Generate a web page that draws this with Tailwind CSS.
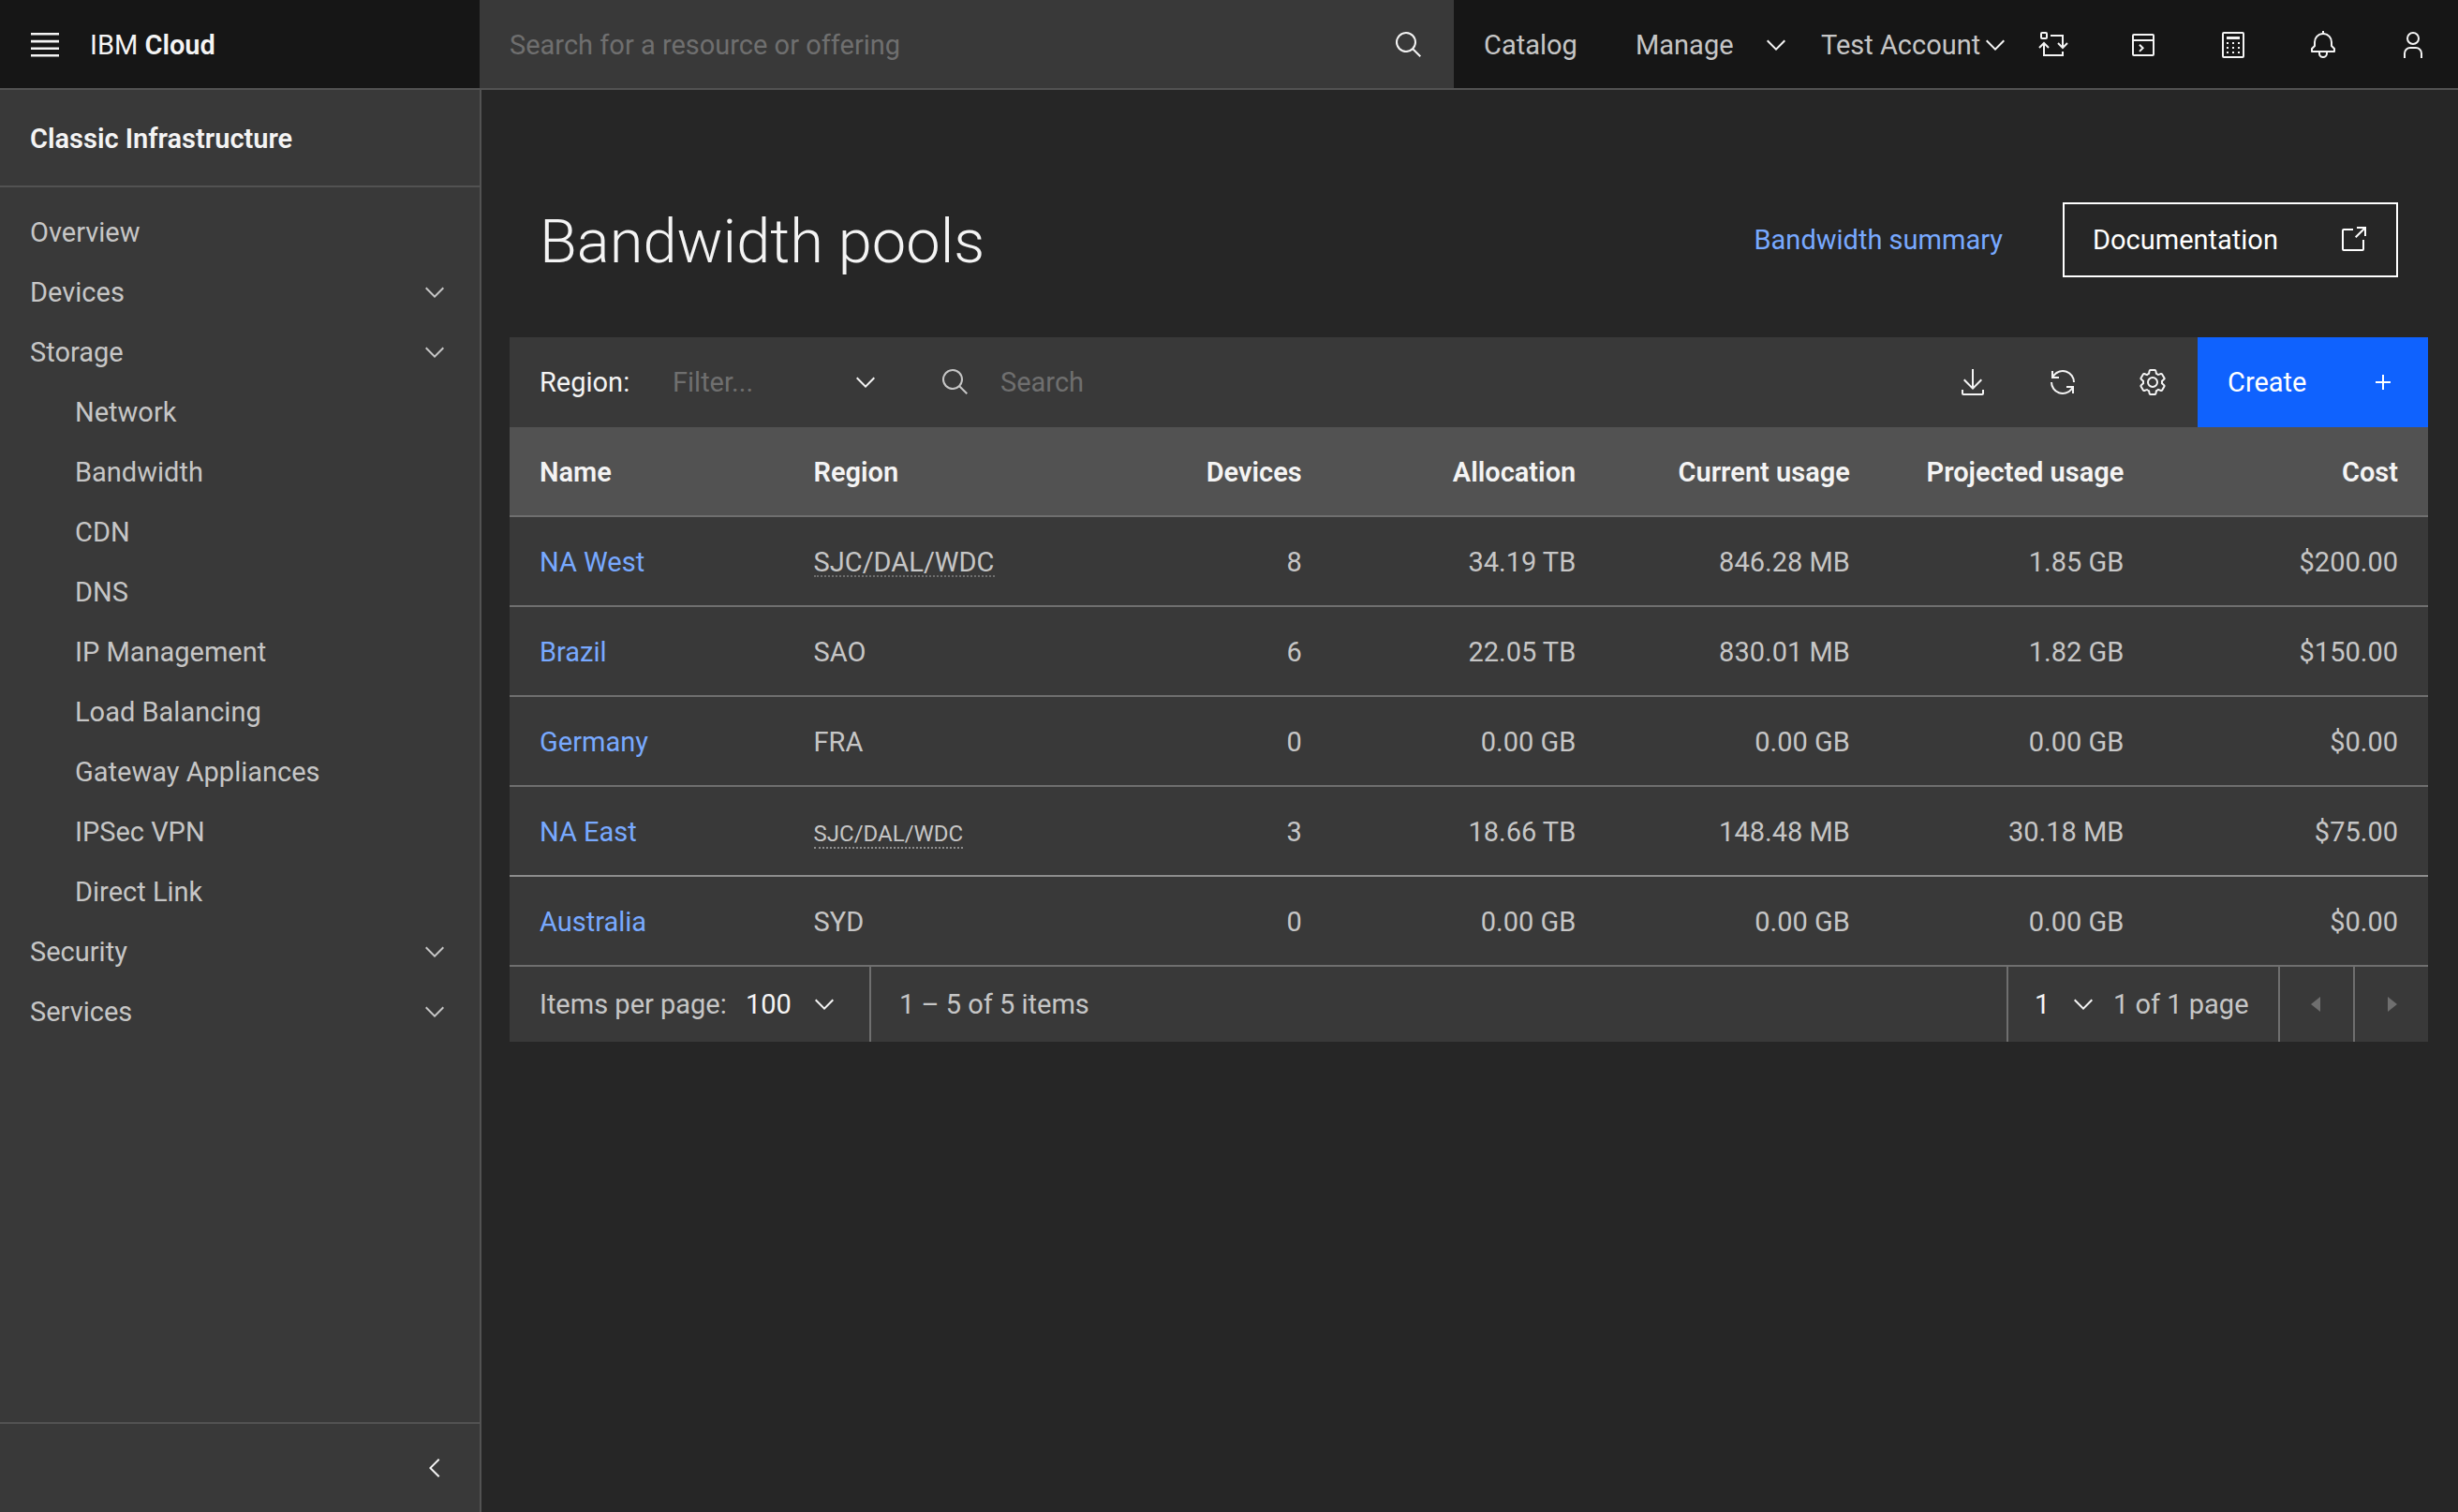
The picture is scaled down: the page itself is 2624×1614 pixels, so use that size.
<!DOCTYPE html>
<html lang="en">
<head>
<meta charset="utf-8">
<meta name="viewport" content="width=device-width, initial-scale=1">
<title>Bandwidth pools - IBM Cloud</title>
<script src="https://cdn.jsdelivr.net/npm/@tailwindcss/browser@4"></script>
</head>
<body class="flex min-h-screen flex-col bg-[#262626] font-['Roboto',sans-serif] text-[29px] leading-9 text-[#c6c6c6]">

<!-- Shared icon shapes -->
<svg class="hidden" aria-hidden="true">
  <symbol id="chevron-down" viewBox="0 0 32 32"><path d="M16 22 6 12l1.4-1.4 8.6 8.6 8.6-8.6L26 12z"/></symbol>
  <symbol id="search" viewBox="0 0 32 32"><path d="m29 27.586-7.552-7.552a11.018 11.018 0 1 0-1.414 1.414L27.586 29ZM4 13a9 9 0 1 1 9 9 9.01 9.01 0 0 1-9-9Z"/></symbol>
</svg>

<header class="relative flex h-24 bg-[#161616] after:absolute after:inset-x-0 after:bottom-0 after:h-0.5 after:bg-[#525252] after:content-['']">
  <div class="flex w-[512px] shrink-0 items-center gap-8 px-8">
    <button type="button" aria-label="Menu" class="text-[#f4f4f4]">
      <svg class="size-8 fill-current" viewBox="0 0 32 32" aria-hidden="true"><path d="M1 3h30v2.6H1zM1 10.8h30v2.6H1zM1 18.4h30V21H1zM1 26h30v2.6H1z"/></svg>
    </button>
    <a href="#" class="text-[#f4f4f4]">IBM <span class="font-semibold">Cloud</span></a>
  </div>
  <form role="search" class="flex min-w-0 flex-1 items-center bg-[#393939] px-8">
    <input type="search" aria-label="Search for a resource or offering" placeholder="Search for a resource or offering" class="h-full min-w-0 flex-1 bg-transparent text-[#f4f4f4] outline-none placeholder:text-[#6f6f6f]">
    <button type="submit" aria-label="Search" class="text-[#f4f4f4]"><svg class="size-8 fill-current" aria-hidden="true"><use href="#search"/></svg></button>
  </form>
  <nav aria-label="Account" class="flex shrink-0 items-stretch">
    <a href="#" class="flex w-[162px] items-center pl-8">Catalog</a>
    <button type="button" class="flex w-[198px] items-center justify-between pl-8">Manage<svg class="size-8 shrink-0 fill-[#f4f4f4]" aria-hidden="true"><use href="#chevron-down"/></svg></button>
    <button type="button" class="flex w-[232px] items-center justify-between pl-8 whitespace-nowrap">Test Account<svg class="size-8 shrink-0 fill-[#f4f4f4]" aria-hidden="true"><use href="#chevron-down"/></svg></button>
    <button type="button" aria-label="Switch account" class="flex w-24 items-center justify-center text-[#f4f4f4]">
      <svg class="size-8 fill-none stroke-current stroke-2" viewBox="0 0 32 32" aria-hidden="true"><rect x="3" y="3" width="6" height="6" rx="1"/><path d="M13 6h13v13M21 14l5 5 5-5M26 23v4H6V14M1 19l5-5 5 5"/></svg>
    </button>
    <button type="button" aria-label="Cloud shell" class="flex w-24 items-center justify-center text-[#f4f4f4]">
      <svg class="size-8 fill-none stroke-current stroke-2" viewBox="0 0 32 32" aria-hidden="true"><rect x="5" y="5" width="22" height="22" rx="1"/><path d="M5 11h22M12 15.7l3.6 3.6-3.6 3.6"/></svg>
    </button>
    <button type="button" aria-label="Cost estimator" class="flex w-24 items-center justify-center text-[#f4f4f4]">
      <svg class="size-8 fill-current" viewBox="0 0 32 32" aria-hidden="true"><rect x="5" y="3" width="22" height="26" rx="1" fill="none" stroke="currentColor" stroke-width="2"/><path d="M9 7h14v3H9zM9 13h2v2H9zM15 13h2v2h-2zM21 13h2v2h-2zM9 18h2v2H9zM15 18h2v2h-2zM21 18h2v2h-2zM9 23h2v2H9zM15 23h2v2h-2zM21 23h2v2h-2z"/></svg>
    </button>
    <button type="button" aria-label="Notifications" class="flex w-24 items-center justify-center text-[#f4f4f4]">
      <svg class="size-8 fill-current" viewBox="0 0 32 32" aria-hidden="true"><path d="M28.7071 19.293 26 16.5859V13a10.0136 10.0136 0 0 0-9-9.9492V1H15V3.0508A10.0136 10.0136 0 0 0 6 13v3.5859L3.2929 19.293A1 1 0 0 0 3 20v3a1 1 0 0 0 1 1h7v.7768a5.152 5.152 0 0 0 4.5 5.1987A5.0057 5.0057 0 0 0 21 25V24h7a1 1 0 0 0 1-1V20A1 1 0 0 0 28.7071 19.293ZM19 25a3 3 0 0 1-6 0V24h6Zm8-3H5V20.4141L7.707 17.707A1 1 0 0 0 8 17V13a8 8 0 0 1 16 0v4a1 1 0 0 0 .293.707L27 20.4141Z"/></svg>
    </button>
    <button type="button" aria-label="Profile" class="flex w-24 items-center justify-center text-[#f4f4f4]">
      <svg class="size-8 fill-current" viewBox="0 0 32 32" aria-hidden="true"><path d="M16 4a5 5 0 1 1-5 5 5 5 0 0 1 5-5m0-2a7 7 0 1 0 7 7 7 7 0 0 0-7-7ZM26 30H24V25a5 5 0 0 0-5-5H13a5 5 0 0 0-5 5v5H6V25a7 7 0 0 1 7-7h6a7 7 0 0 1 7 7Z"/></svg>
    </button>
  </nav>
</header>

<div class="flex flex-1">
  <aside class="flex w-[514px] shrink-0 flex-col border-r-2 border-[#525252] bg-[#393939]">
    <h2 class="flex h-[104px] items-center border-b-2 border-[#525252] px-8 pt-0.5 font-semibold text-[#f4f4f4]">Classic Infrastructure</h2>
    <nav aria-label="Classic Infrastructure" class="flex flex-1 flex-col pt-4">
      <a href="#" class="flex h-16 items-center px-8">Overview</a>
      <button type="button" class="flex h-16 items-center justify-between px-8">Devices<svg class="size-8 fill-current" aria-hidden="true"><use href="#chevron-down"/></svg></button>
      <button type="button" aria-expanded="true" class="flex h-16 items-center justify-between px-8">Storage<svg class="size-8 fill-current" aria-hidden="true"><use href="#chevron-down"/></svg></button>
      <ul>
        <li><a href="#" class="flex h-16 items-center pl-20">Network</a></li>
        <li><a href="#" class="flex h-16 items-center pl-20">Bandwidth</a></li>
        <li><a href="#" class="flex h-16 items-center pl-20">CDN</a></li>
        <li><a href="#" class="flex h-16 items-center pl-20">DNS</a></li>
        <li><a href="#" class="flex h-16 items-center pl-20">IP Management</a></li>
        <li><a href="#" class="flex h-16 items-center pl-20">Load Balancing</a></li>
        <li><a href="#" class="flex h-16 items-center pl-20">Gateway Appliances</a></li>
        <li><a href="#" class="flex h-16 items-center pl-20">IPSec VPN</a></li>
        <li><a href="#" class="flex h-16 items-center pl-20">Direct Link</a></li>
      </ul>
      <button type="button" class="flex h-16 items-center justify-between px-8">Security<svg class="size-8 fill-current" aria-hidden="true"><use href="#chevron-down"/></svg></button>
      <button type="button" class="flex h-16 items-center justify-between px-8">Services<svg class="size-8 fill-current" aria-hidden="true"><use href="#chevron-down"/></svg></button>
    </nav>
    <button type="button" aria-label="Collapse navigation" class="flex h-24 items-center justify-end border-t-2 border-[#525252] px-8 text-[#f4f4f4]">
      <svg class="size-8 fill-current" viewBox="0 0 32 32" aria-hidden="true"><path d="M10 16 20 6l1.4 1.4-8.6 8.6 8.6 8.6L20 26z"/></svg>
    </button>
  </aside>

  <main class="min-w-0 flex-1 pt-[120px] pr-8 pl-[30px]">
    <div class="mb-16 flex h-20 items-center px-8">
      <h1 class="flex-1 pt-1 text-[65px] leading-20 font-light text-[#f4f4f4]">Bandwidth pools</h1>
      <a href="#" class="mr-16 text-[#78a9ff]">Bandwidth summary</a>
      <a href="#" class="flex h-20 w-[358px] items-center justify-between border-2 border-white px-[30px] text-white">Documentation
        <svg class="size-8 fill-current" viewBox="0 0 32 32" aria-hidden="true"><path d="M26 28H6a2 2 0 0 1-2-2V6a2 2 0 0 1 2-2H16V6H6V26H26V16h2V26A2 2 0 0 1 26 28ZM20 2V4h6.586L18 12.586 19.414 14 28 5.414V12h2V2Z"/></svg>
      </a>
    </div>

    <div class="flex h-24 items-center bg-[#393939] pl-8">
      <label for="region" class="w-[142px] text-[#f4f4f4]">Region:</label>
      <div class="relative mr-16 w-[222px]">
        <select id="region" class="h-12 w-full appearance-none bg-transparent text-[#6f6f6f] outline-none"><option>Filter...</option></select>
        <svg class="pointer-events-none absolute top-2 right-0 size-8 fill-[#f4f4f4]" aria-hidden="true"><use href="#chevron-down"/></svg>
      </div>
      <label for="pool-search" class="mr-8" aria-label="Search"><svg class="size-8 fill-current" aria-hidden="true"><use href="#search"/></svg></label>
      <input id="pool-search" type="search" placeholder="Search" class="h-full min-w-0 flex-1 bg-transparent text-[#f4f4f4] outline-none placeholder:text-[#6f6f6f]">
      <button type="button" aria-label="Download" class="flex size-24 items-center justify-center text-[#f4f4f4]">
        <svg class="size-8 fill-current" viewBox="0 0 32 32" aria-hidden="true"><path d="M26 24v4H6v-4H4v4a2 2 0 0 0 2 2h20a2 2 0 0 0 2-2v-4zM26 14l-1.41-1.41L17 20.17V2h-2v18.17l-7.59-7.58L6 14l10 10z"/></svg>
      </button>
      <button type="button" aria-label="Refresh" class="flex size-24 items-center justify-center text-[#f4f4f4]">
        <svg class="size-8 fill-current" viewBox="0 0 32 32" aria-hidden="true"><path d="M12 10H6.78A11 11 0 0 1 27 16h2A13 13 0 0 0 6 7.68V4H4v8h8ZM20 22h5.22A11 11 0 0 1 5 16H3a13 13 0 0 0 23 8.32V28h2V20H20Z"/></svg>
      </button>
      <button type="button" aria-label="Settings" class="flex size-24 items-center justify-center text-[#f4f4f4]">
        <svg class="size-8 fill-current" viewBox="0 0 32 32" aria-hidden="true"><path d="M27 16.76c0-.25 0-.5 0-.76s0-.51 0-.77l1.92-1.68A2 2 0 0 0 29.3 11L26.94 7a2 2 0 0 0-1.73-1 2 2 0 0 0-.64.1l-2.43.82a11.35 11.35 0 0 0-1.31-.75l-.51-2.52a2 2 0 0 0-2-1.61H13.64a2 2 0 0 0-2 1.61l-.51 2.52a11.48 11.48 0 0 0-1.32.75L7.43 6.06A2 2 0 0 0 6.79 6 2 2 0 0 0 5.06 7L2.7 11a2 2 0 0 0 .41 2.51L5 15.24c0 .25 0 .5 0 .76s0 .51 0 .77L3.11 18.45A2 2 0 0 0 2.7 21L5.06 25a2 2 0 0 0 1.73 1 2 2 0 0 0 .64-.1l2.43-.82a11.35 11.35 0 0 0 1.31.75l.51 2.52a2 2 0 0 0 2 1.61h4.72a2 2 0 0 0 2-1.61l.51-2.52a11.48 11.48 0 0 0 1.32-.75l2.42.82a2 2 0 0 0 .64.1 2 2 0 0 0 1.73-1L29.3 21a2 2 0 0 0-.41-2.51ZM25.21 24l-3.43-1.16a8.86 8.86 0 0 1-2.71 1.57L18.36 28H13.64l-.71-3.55a9.36 9.36 0 0 1-2.7-1.57L6.79 24 4.43 20l2.72-2.4a8.9 8.9 0 0 1 0-3.13L4.43 12 6.79 8l3.43 1.16a8.86 8.86 0 0 1 2.71-1.57L13.64 4h4.72l.71 3.55a9.36 9.36 0 0 1 2.7 1.57L25.21 8 27.57 12l-2.72 2.4a8.9 8.9 0 0 1 0 3.13L27.57 20Z"/><path d="M16 22a6 6 0 1 1 6-6 5.94 5.94 0 0 1-6 6Zm0-10a3.91 3.91 0 0 0-4 4 3.91 3.91 0 0 0 4 4 3.91 3.91 0 0 0 4-4 3.91 3.91 0 0 0-4-4Z"/></svg>
      </button>
      <button type="button" class="flex h-24 w-[246px] items-center justify-between bg-[#0f62fe] px-8 text-white">Create
        <svg class="size-8 fill-current" viewBox="0 0 32 32" aria-hidden="true"><path d="M17 15V8h-2v7H8v2h7v7h2v-7h7v-2z"/></svg>
      </button>
    </div>

    <table class="w-full table-fixed border-separate border-spacing-0 bg-[#393939] text-right [&_td]:h-24 [&_td]:border-b-2 [&_td]:border-[#6f6f6f] [&_td]:px-8 [&_td]:pt-0.5 [&_th]:h-24 [&_th]:border-b-2 [&_th]:border-[#6f6f6f] [&_th]:px-8 [&_th]:pt-0.5">
      <thead class="bg-[#525252] whitespace-nowrap text-[#f4f4f4]">
        <tr>
          <th scope="col" class="text-left font-semibold">Name</th>
          <th scope="col" class="text-left font-semibold">Region</th>
          <th scope="col" class="font-semibold">Devices</th>
          <th scope="col" class="font-semibold">Allocation</th>
          <th scope="col" class="font-semibold">Current usage</th>
          <th scope="col" class="font-semibold">Projected usage</th>
          <th scope="col" class="font-semibold">Cost</th>
        </tr>
      </thead>
      <tbody>
        <tr><td class="text-left"><a href="#" class="text-[#78a9ff]">NA West</a></td><td class="text-left"><span class="inline-block border-b-2 border-dotted border-[#6f6f6f] leading-7">SJC/DAL/WDC</span></td><td>8</td><td>34.19 TB</td><td>846.28 MB</td><td>1.85 GB</td><td>$200.00</td></tr>
        <tr><td class="text-left"><a href="#" class="text-[#78a9ff]">Brazil</a></td><td class="text-left">SAO</td><td>6</td><td>22.05 TB</td><td>830.01 MB</td><td>1.82 GB</td><td>$150.00</td></tr>
        <tr><td class="text-left"><a href="#" class="text-[#78a9ff]">Germany</a></td><td class="text-left">FRA</td><td>0</td><td>0.00 GB</td><td>0.00 GB</td><td>0.00 GB</td><td>$0.00</td></tr>
        <tr class="[&>td]:border-[#8d8d8d]!"><td class="text-left"><a href="#" class="text-[#78a9ff]">NA East</a></td><td class="text-left"><span class="inline-block border-b-2 border-dotted border-[#8d8d8d] text-2xl leading-7">SJC/DAL/WDC</span></td><td>3</td><td>18.66 TB</td><td>148.48 MB</td><td>30.18 MB</td><td>$75.00</td></tr>
        <tr><td class="text-left"><a href="#" class="text-[#78a9ff]">Australia</a></td><td class="text-left">SYD</td><td>0</td><td>0.00 GB</td><td>0.00 GB</td><td>0.00 GB</td><td>$0.00</td></tr>
      </tbody>
    </table>

    <div class="flex h-20 items-stretch bg-[#393939]">
      <div class="flex w-[386px] items-center justify-between border-r-2 border-[#6f6f6f] px-8">
        <label for="page-size">Items per page:</label>
        <div class="relative w-[100px]">
          <select id="page-size" class="h-12 w-full appearance-none bg-transparent text-[#f4f4f4] outline-none"><option>100</option></select>
          <svg class="pointer-events-none absolute top-2 right-0 size-8 fill-[#f4f4f4]" aria-hidden="true"><use href="#chevron-down"/></svg>
        </div>
      </div>
      <p class="flex flex-1 items-center pl-[30px]">1 – 5 of 5 items</p>
      <div class="flex w-[290px] items-center gap-4 border-l-2 border-[#6f6f6f] pl-7">
        <div class="relative w-[68px]">
          <select aria-label="Page" class="h-12 w-full appearance-none bg-transparent text-[#f4f4f4] outline-none"><option>1</option></select>
          <svg class="pointer-events-none absolute top-2 right-0 size-8 fill-[#f4f4f4]" aria-hidden="true"><use href="#chevron-down"/></svg>
        </div>
        <span>1 of 1 page</span>
      </div>
      <button type="button" disabled aria-label="Previous page" class="flex w-20 items-center justify-center border-l-2 border-[#6f6f6f]"><svg class="size-8 fill-[#6f6f6f]" viewBox="0 0 32 32" aria-hidden="true"><path d="M20 24 10 16l10-8z"/></svg></button>
      <button type="button" disabled aria-label="Next page" class="flex w-20 items-center justify-center border-l-2 border-[#6f6f6f]"><svg class="size-8 fill-[#6f6f6f]" viewBox="0 0 32 32" aria-hidden="true"><path d="m12 8 10 8-10 8z"/></svg></button>
    </div>
  </main>
</div>
</body>
</html>
